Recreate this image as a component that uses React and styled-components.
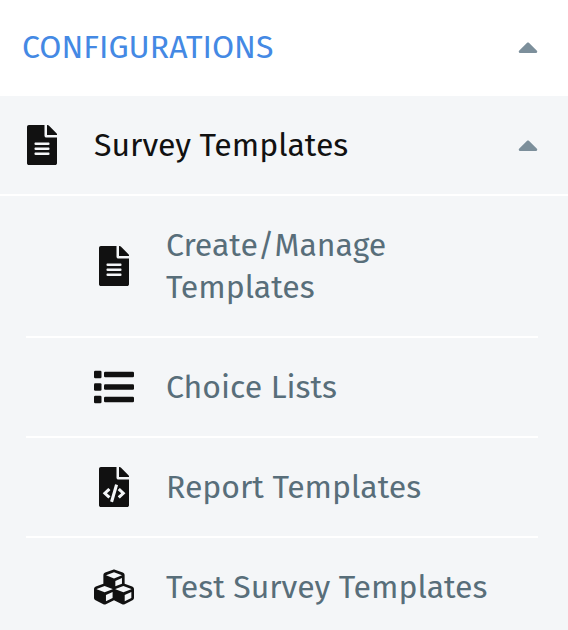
import React, { useState } from 'react';
import styled, { createGlobalStyle } from 'styled-components';
import { FaCaretUp, FaCubes, FaFileAlt, FaFileCode } from 'react-icons/fa';

const GlobalStyle = createGlobalStyle`
  * {
    box-sizing: border-box;
  }

  body {
    margin: 0;
    background: #f4f6f8;
    font-family: 'Fira Sans', 'Noto Sans', sans-serif;
    font-size: 32px;
    line-height: 42px;
  }
`;

const Sidebar = styled.nav`
  width: 100%;
`;

const Toggle = styled.button`
  display: flex;
  align-items: center;
  gap: 32px;
  width: 100%;
  border: 0;
  font: inherit;
  text-align: left;
  cursor: pointer;
`;

const SectionToggle = styled(Toggle)`
  padding: 26px 30px 28px 22px;
  background: #fff;
  color: #4489e4;
`;

const GroupToggle = styled(Toggle)`
  padding: 28px 30px 28px 22px;
  border-bottom: 2px solid #fff;
  background: #f4f6f8;
  color: #111;
`;

const Label = styled.span`
  flex: 1;
`;

const Caret = styled(FaCaretUp)`
  flex: none;
  width: 20px;
  height: 32px;
  color: #7c8f9b;
  transform: ${({ $open }) => ($open ? 'none' : 'rotate(180deg)')};
`;

const IconBox = styled.span`
  display: flex;
  flex: none;
  justify-content: center;
  width: 40px;
  color: #111;
  font-size: 40px;
`;

const Items = styled.ul`
  margin: 0;
  padding: 0 30px 0 26px;
  list-style: none;
`;

const Item = styled.li`
  & + & {
    border-top: 2px solid #fff;
  }
`;

const ItemLink = styled.a`
  display: flex;
  align-items: center;
  gap: 32px;
  padding: 28px 0 28px 68px;
  color: #586e7a;
  text-decoration: none;
`;

const ListIcon = () => (
  <svg viewBox="0 0 512 512" width="1em" height="1em" fill="currentColor" aria-hidden="true">
    {[0, 160, 320].map((y) => (
      <g key={y} transform={`translate(0 ${y})`}>
        <rect x="0" y="48" width="96" height="96" rx="16" />
        <rect x="128" y="60" width="384" height="72" rx="16" />
      </g>
    ))}
  </svg>
);

const templates = [
  { label: 'Create/Manage Templates', icon: FaFileAlt, href: '#manage' },
  { label: 'Choice Lists', icon: ListIcon, href: '#choice-lists' },
  { label: 'Report Templates', icon: FaFileCode, href: '#reports' },
  { label: 'Test Survey Templates', icon: FaCubes, href: '#test' },
];

const App = () => {
  const [sectionOpen, setSectionOpen] = useState(true);
  const [groupOpen, setGroupOpen] = useState(true);

  return (
    <>
      <GlobalStyle />
      <Sidebar>
        <SectionToggle
          type="button"
          aria-expanded={sectionOpen}
          onClick={() => setSectionOpen(!sectionOpen)}
        >
          <Label>CONFIGURATIONS</Label>
          <Caret $open={sectionOpen} />
        </SectionToggle>
        {sectionOpen && (
          <GroupToggle
            type="button"
            aria-expanded={groupOpen}
            onClick={() => setGroupOpen(!groupOpen)}
          >
            <IconBox>
              <FaFileAlt />
            </IconBox>
            <Label>Survey Templates</Label>
            <Caret $open={groupOpen} />
          </GroupToggle>
        )}
        {sectionOpen && groupOpen && (
          <Items>
            {templates.map(({ label, icon: Icon, href }) => (
              <Item key={href}>
                <ItemLink href={href}>
                  <IconBox>
                    <Icon />
                  </IconBox>
                  <span>{label}</span>
                </ItemLink>
              </Item>
            ))}
          </Items>
        )}
      </Sidebar>
    </>
  );
};

export default App;
